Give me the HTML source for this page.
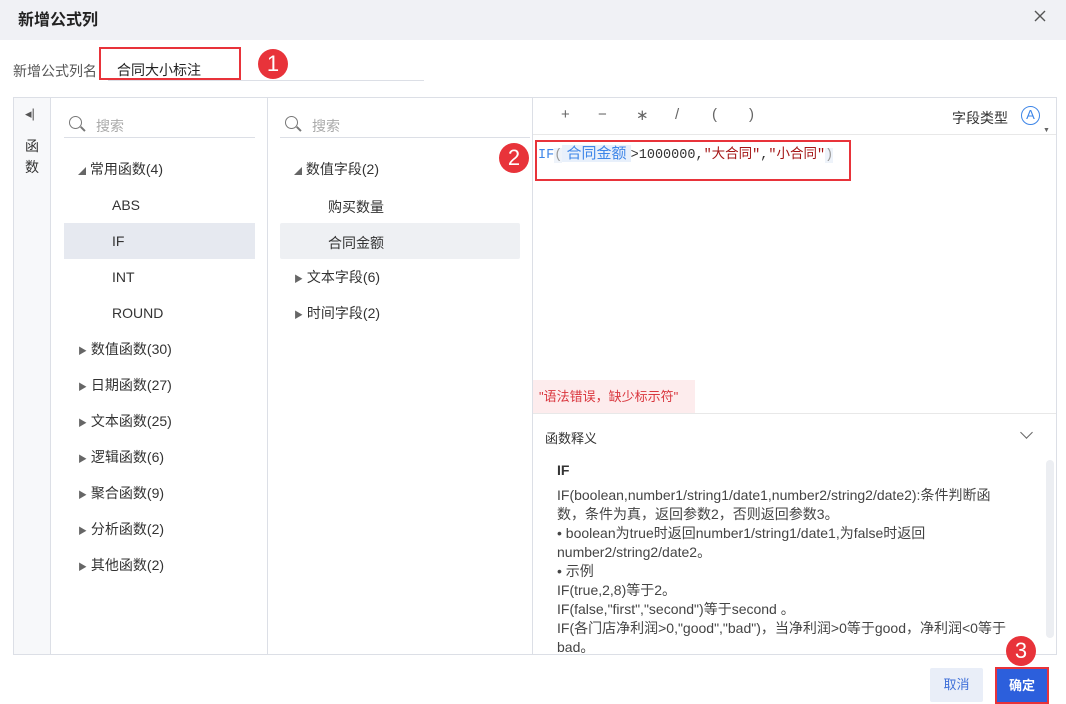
<!DOCTYPE html>
<html><head><meta charset="utf-8"><style>
*{box-sizing:border-box;margin:0;padding:0}
body{width:1066px;height:704px;background:#fff;font-family:"Liberation Sans","Noto Sans CJK SC",sans-serif;color:#333;position:relative;overflow:hidden;font-size:14px}
.a{position:absolute}
.hdr{left:0;top:0;width:1066px;height:40px;background:#f0f1f5}
.circ{width:30px;height:30px;border-radius:50%;background:#e8333a;color:#fff;font-size:22px;text-align:center;line-height:30px}
.t{white-space:nowrap}
.srch{border-bottom:1px solid #dcdfe6;height:26px}
.desc{font-size:14px;line-height:19px;color:#444}
</style></head><body>
<div class="a hdr"></div>
<div class="a t" style="left:18px;top:6px;font-size:16px;font-weight:bold;color:#222">新增公式列</div>
<svg class="a" style="left:1034px;top:10px" width="12" height="12" viewBox="0 0 12 12"><path d="M1 1L11 11M11 1L1 11" stroke="#555" stroke-width="1.4"/></svg>

<div class="a t" style="left:13px;top:61px;color:#555">新增公式列名</div>
<div class="a" style="left:108px;top:80px;width:316px;border-bottom:1px solid #dcdfe6"></div>
<div class="a" style="left:99px;top:47px;width:142px;height:33px;border:2px solid #e8333a"></div>
<div class="a t" style="left:117px;top:60px;color:#222">合同大小标注</div>
<div class="a circ" style="left:258px;top:49px">1</div>

<div class="a" style="left:13px;top:97px;width:1044px;height:558px;border:1px solid #dcdfe6"></div>
<div class="a" style="left:14px;top:98px;width:37px;height:556px;background:#f7f8fa;border-right:1px solid #dcdfe6"></div>
<div class="a" style="left:267px;top:98px;width:1px;height:556px;background:#dcdfe6"></div>
<div class="a" style="left:532px;top:98px;width:1px;height:556px;background:#dcdfe6"></div>
<div class="a t" style="left:25px;top:106px;font-size:13px;color:#555">◂|</div>
<div class="a" style="left:25px;top:136px;font-size:14px;line-height:21px;width:14px">函数</div>

<div class="a srch" style="left:64px;top:112px;width:191px"></div>
<div class="a" style="left:69px;top:116px;width:13px;height:13px;border:1.5px solid #777;border-radius:50%"></div>
<div class="a" style="left:80px;top:128px;width:6px;height:1.5px;background:#777;transform:rotate(45deg)"></div>
<div class="a t" style="left:96px;top:116px;color:#aaa">搜索</div>
<div class="a srch" style="left:280px;top:112px;width:251px;width:250px"></div>
<div class="a" style="left:285px;top:116px;width:13px;height:13px;border:1.5px solid #777;border-radius:50%"></div>
<div class="a" style="left:296px;top:128px;width:6px;height:1.5px;background:#777;transform:rotate(45deg)"></div>
<div class="a t" style="left:312px;top:116px;color:#aaa">搜索</div>

<div class="a" style="left:64px;top:223px;width:191px;height:36px;background:#e6e9f0"></div>
<div class="a" style="left:280px;top:223px;width:240px;height:36px;background:#eef0f3;border-radius:2px"></div>

<div class="a t" style="left:78px;top:161px;line-height:16px"><span style="font-size:8px;color:#666">◢</span> 常用函数(4)</div>
<div class="a t" style="left:112px;top:197px">ABS</div>
<div class="a t" style="left:112px;top:233px">IF</div>
<div class="a t" style="left:112px;top:269px">INT</div>
<div class="a t" style="left:112px;top:305px">ROUND</div>
<div class="a" style="left:78px;top:341px;line-height:16px">
<div style="height:36px"><span style="font-size:9px;color:#666">▶</span> 数值函数(30)</div>
<div style="height:36px"><span style="font-size:9px;color:#666">▶</span> 日期函数(27)</div>
<div style="height:36px"><span style="font-size:9px;color:#666">▶</span> 文本函数(25)</div>
<div style="height:36px"><span style="font-size:9px;color:#666">▶</span> 逻辑函数(6)</div>
<div style="height:36px"><span style="font-size:9px;color:#666">▶</span> 聚合函数(9)</div>
<div style="height:36px"><span style="font-size:9px;color:#666">▶</span> 分析函数(2)</div>
<div style="height:36px"><span style="font-size:9px;color:#666">▶</span> 其他函数(2)</div>
</div>

<div class="a t" style="left:294px;top:161px;line-height:16px"><span style="font-size:8px;color:#666">◢</span> 数值字段(2)</div>
<div class="a t" style="left:328px;top:197px">购买数量</div>
<div class="a t" style="left:328px;top:233px">合同金额</div>
<div class="a t" style="left:294px;top:269px;line-height:16px"><span style="font-size:9px;color:#666">▶</span> 文本字段(6)</div>
<div class="a t" style="left:294px;top:305px;line-height:16px"><span style="font-size:9px;color:#666">▶</span> 时间字段(2)</div>

<div class="a" style="left:533px;top:134px;width:523px;height:1px;background:#e8e8e8"></div>
<div class="a t" style="left:561px;top:106px;font-size:15px;color:#666"><span style="position:absolute;left:0">+</span><span style="position:absolute;left:37px">−</span><span style="position:absolute;left:75px">∗</span><span style="position:absolute;left:114px">/</span><span style="position:absolute;left:151px">(</span><span style="position:absolute;left:188px">)</span></div>
<div class="a t" style="left:952px;top:108px;color:#333">字段类型</div>
<div class="a" style="left:1021px;top:106px;width:19px;height:19px;border:1.5px solid #3e86e8;border-radius:50%;color:#3e86e8;font-size:13px;text-align:center;line-height:16px">A</div>
<div class="a" style="left:1043px;top:127px;font-size:7px;color:#666">▼</div>

<div class="a" style="left:535px;top:140px;width:316px;height:41px;border:2px solid #e8333a"></div>
<div class="a t" style="left:538px;top:145px;font-family:'Liberation Mono','Noto Sans CJK SC',monospace;font-size:13.5px;line-height:17px"><span style="color:#3e86e8">IF</span><span style="color:#999;background:#eef3fa">(</span><span style="color:#3e86e8;background:#e8f0fb;font-family:'Liberation Sans','Noto Sans CJK SC',sans-serif;font-size:15px"> 合同金额 </span><span style="color:#333">&gt;1000000,</span><span style="color:#a31515">"大合同"</span><span style="color:#333">,</span><span style="color:#a31515">"小合同"</span><span style="color:#999;background:#eef3fa">)</span></div>
<div class="a circ" style="left:499px;top:143px">2</div>

<div class="a t" style="left:533px;top:380px;width:162px;height:33px;background:#fdeced;color:#d9363e;font-size:13px;line-height:33px;padding-left:6px">"语法错误，缺少标示符"</div>
<div class="a" style="left:533px;top:413px;width:523px;height:1px;background:#e8e8e8"></div>
<div class="a t" style="left:545px;top:428px;font-size:13px">函数释义</div>
<div class="a" style="left:1022px;top:428px;width:9px;height:9px;border-right:1.5px solid #666;border-bottom:1.5px solid #666;transform:rotate(45deg)"></div>
<div class="a" style="left:1046px;top:460px;width:8px;height:178px;background:#eceef2;border-radius:4px"></div>
<div class="a t" style="left:557px;top:462px;font-weight:bold;font-size:14px">IF</div>
<div class="a desc" style="left:557px;top:486px;width:470px;white-space:nowrap">IF(boolean,number1/string1/date1,number2/string2/date2):条件判断函<br>数，条件为真，返回参数2，否则返回参数3。<br>• boolean为true时返回number1/string1/date1,为false时返回<br>number2/string2/date2。<br>• 示例<br>IF(true,2,8)等于2。<br>IF(false,"first","second")等于second 。<br>IF(各门店净利润&gt;0,"good","bad")，当净利润&gt;0等于good，净利润&lt;0等于<br>bad。</div>
<div class="a" style="left:0;top:655px;width:1066px;height:49px;background:#fff"></div>
<div class="a" style="left:13px;top:654px;width:1044px;height:1px;background:#dcdfe6"></div>

<div class="a" style="left:930px;top:668px;width:53px;height:34px;background:#e9eef8;border-radius:2px;color:#3e6fd8;font-size:13px;text-align:center;line-height:34px">取消</div>
<div class="a" style="left:995px;top:667px;width:54px;height:37px;border:2px solid #e8333a"></div>
<div class="a" style="left:997px;top:669px;width:50px;height:33px;background:#2c5fdc;color:#fff;font-weight:bold;font-size:13px;text-align:center;line-height:33px">确定</div>
<div class="a circ" style="left:1006px;top:636px">3</div>
</body></html>
